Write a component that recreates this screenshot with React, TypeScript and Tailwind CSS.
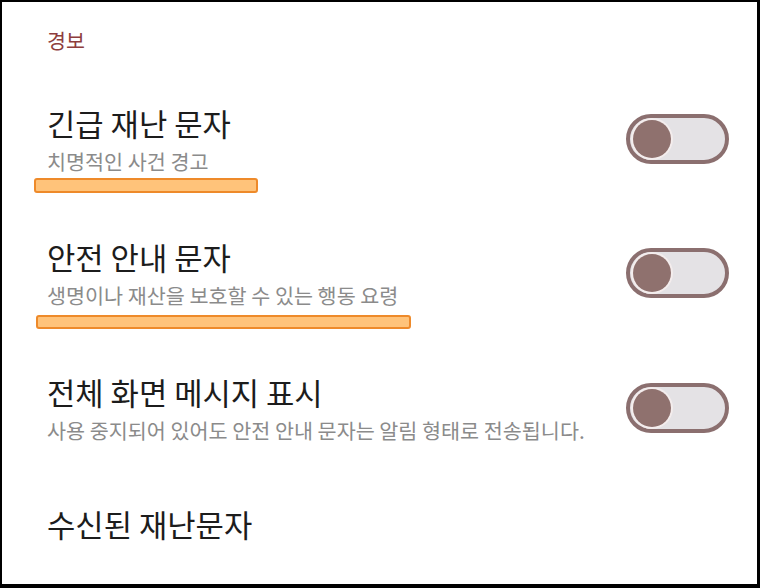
import React from 'react';

const font = { fontFamily: "'Noto Sans CJK KR', 'Noto Sans', sans-serif" };

function Toggle() {
  return (
    <div className="mt-[9px] mr-[28px] w-[103px] h-[50px] shrink-0 rounded-full border-[4px] border-[#8b6f6f] bg-[#e4e2e5] flex items-center pl-[3px]">
      <div className="w-[38px] h-[38px] rounded-full bg-[#8f716e] ring-2 ring-[#f4eded]" />
    </div>
  );
}

interface RowProps {
  title: string;
  sub?: string;
  height: string;
  bar?: React.ReactNode;
  toggle?: boolean;
}

function Row({ title, sub, height, bar, toggle = true }: RowProps) {
  return (
    <div className={`flex items-start justify-between ${height}`}>
      <div className="flex flex-col">
        <div className="text-[30.8px] leading-[36px] text-[#1c1c1c] whitespace-nowrap">{title}</div>
        {sub && <div className="mt-[7px] text-[20.7px] leading-[26px] text-[#8b8b8b] whitespace-nowrap">{sub}</div>}
        {bar}
      </div>
      {toggle && <Toggle />}
    </div>
  );
}

export default function App() {
  return (
    <div className="w-[760px] h-[588px] bg-black pt-[2px] pl-[2px] pr-[3px] pb-[4px]" style={font}>
      <div className="h-full bg-white pl-[45px] pt-[24px] overflow-hidden">
        <div className="text-[20.6px] leading-[28px] text-[#8e3d3d]">경보</div>

        <div className="mt-[51px]">
          <Row
            title="긴급 재난 문자"
            sub="치명적인 사건 경고"
            height="h-[134px]"
            bar={<div className="mt-[4px] -ml-[13px] w-[224px] h-[15px] rounded-[3px] border-2 border-[#ee8a2a] bg-[#ffc37a]" />}
          />
          <Row
            title="안전 안내 문자"
            sub="생명이나 재산을 보호할 수 있는 행동 요령"
            height="h-[135px]"
            bar={<div className="mt-[7px] -ml-[11px] w-[375px] h-[14px] rounded-[3px] border-2 border-[#ee8a2a] bg-[#ffc37a]" />}
          />
          <Row
            title="전체 화면 메시지 표시"
            sub="사용 중지되어 있어도 안전 안내 문자는 알림 형태로 전송됩니다."
            height="h-[132px]"
          />
          <Row title="수신된 재난문자" height="h-[60px]" toggle={false} />
        </div>
      </div>
    </div>
  );
}
